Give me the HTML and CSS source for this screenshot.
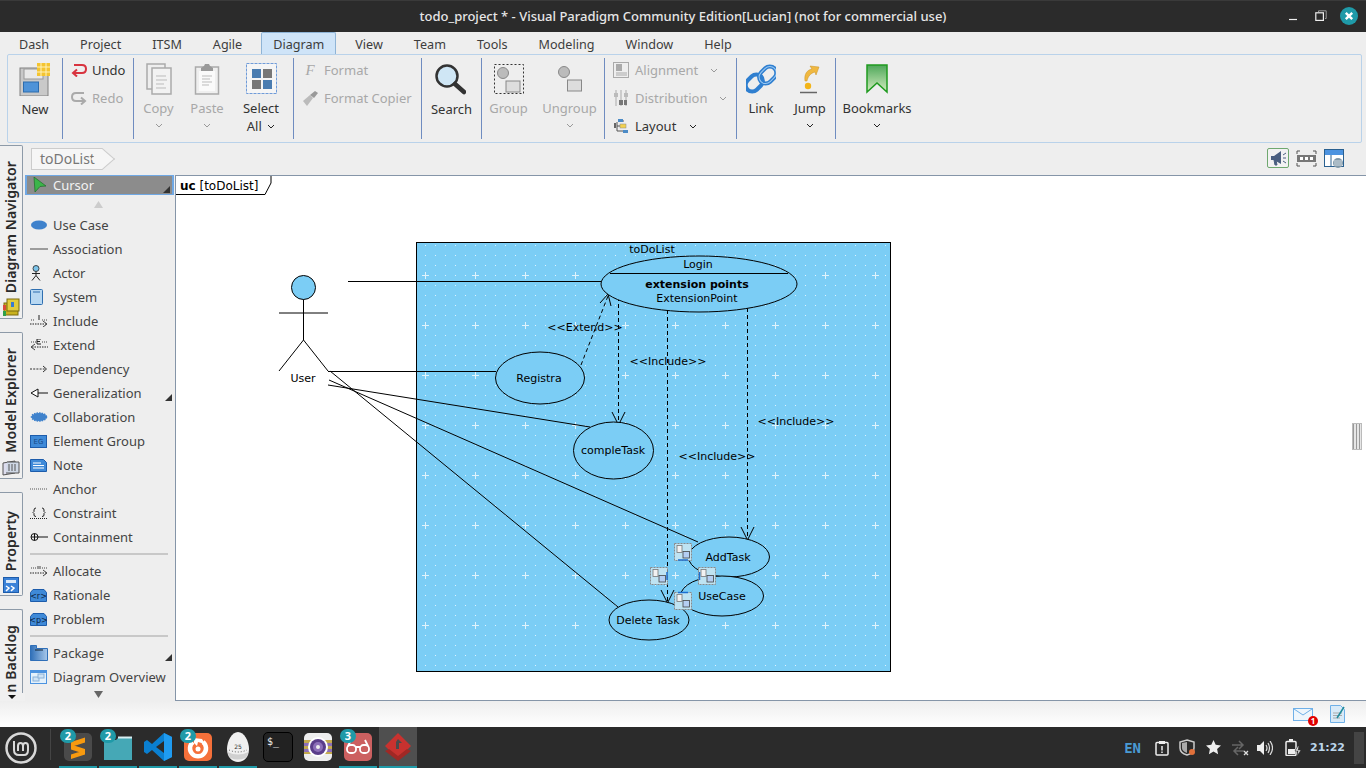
FILE: index.html
```html
<!DOCTYPE html>
<html lang="en">
<head>
  <meta charset="UTF-8">
  <title>todo_project - Visual Paradigm</title>
  <link rel="stylesheet" href="styles.css">
</head>
<body>

  <header class="titlebar">
    <span class="title">todo_project * - Visual Paradigm Community Edition[Lucian] (not for commercial use)</span>
    <div class="win-buttons">
      <svg class="win-min" width="10" height="10" viewBox="0 0 10 10"><path d="M1 8.500h8" stroke="#eee" stroke-width="1.200"/></svg>
      <svg width="12" height="12" viewBox="0 0 12 12"><path d="M3.500 2V.8h7.700v7.700H10" fill="none" stroke="#999"/><rect x=".8" y="2.800" width="7.600" height="7.600" fill="none" stroke="#eee" stroke-width="1.200"/></svg>
      <svg width="18" height="18" viewBox="0 0 18 18"><circle cx="9" cy="9" r="9" fill="#1f9aa8"/><path d="M5.800 5.800l6.400 6.400M12.200 5.800l-6.400 6.400" stroke="#fff" stroke-width="2.400"/></svg>
    </div>
  </header>

  <nav class="menu">
    <a>Dash</a><a>Project</a><a>ITSM</a><a>Agile</a><a class="active">Diagram</a><a>View</a><a>Team</a><a>Tools</a><a>Modeling</a><a>Window</a><a>Help</a>
  </nav>

  <section class="ribbon">
    <div class="group g-new">
      <div class="big w-new">
        <div class="ico"><svg width="32" height="34" viewBox="0 0 32 34"><rect x="1" y="6" width="28" height="28" fill="#c9c9c9" stroke="#808080"/><rect x="5" y="7" width="19" height="10" fill="#e9e9e9" stroke="#999"/><rect x="4.500" y="20" width="15" height="10" fill="#4f93d8" stroke="#2d6cae"/><rect x="18" y="1" width="13" height="13" fill="#f4c430"/><path d="M22 1v13M27 1v13M18 5h13M18 10h13" stroke="#fff2b8"/></svg></div>
        <span>New</span>
      </div>
    </div>
    <div class="group g-undo">
      <div class="row"><svg width="16" height="14" viewBox="0 0 16 14"><path d="M3 2h8q4 0 4 4t-4 4H2" fill="none" stroke="#d8333f" stroke-width="2"/><path d="M6 6.500L2 10l4 3.500" fill="none" stroke="#d8333f" stroke-width="2"/></svg><span>Undo</span></div>
      <div class="row off"><svg width="16" height="14" viewBox="0 0 16 14"><path d="M13 2H5Q1 2 1 6t4 4h9" fill="none" stroke="#aaa" stroke-width="2"/><path d="M10 6.500l4 3.500-4 3.500" fill="none" stroke="#aaa" stroke-width="2"/></svg><span>Redo</span></div>
    </div>
    <div class="group g-clip">
      <div class="big w-copy off">
        <div class="ico"><svg width="26" height="32" viewBox="0 0 26 32"><rect x="1" y="1" width="18" height="25" fill="#eee" stroke="#aaa" stroke-width="1.500"/><rect x="6" y="5" width="19" height="26" fill="#f2f2f2" stroke="#aaa" stroke-width="1.500"/><path d="M10 13h10M10 17h11M10 21h8M10 25h10" stroke="#bbb"/></svg></div>
        <span>Copy</span><svg class="chev" width="8" height="5" viewBox="0 0 8 5"><path d="M1 1l3 3 3-3" fill="none" stroke="#999"/></svg>
      </div>
      <div class="big w-paste off">
        <div class="ico"><svg width="26" height="32" viewBox="0 0 26 32"><rect x="1.500" y="4" width="23" height="27" fill="#efefef" stroke="#aaa" stroke-width="1.500"/><rect x="5" y="8" width="16" height="20" fill="#fafafa"/><path d="M7 5l3-2 1-2h4l1 2 3 2v3H7z" fill="#999"/><path d="M8 13h10M8 16h8M8 19h10M8 22h7" stroke="#bbb"/></svg></div>
        <span>Paste</span><svg class="chev" width="8" height="5" viewBox="0 0 8 5"><path d="M1 1l3 3 3-3" fill="none" stroke="#999"/></svg>
      </div>
      <div class="big w-select">
        <div class="ico"><svg width="31" height="32" viewBox="0 0 31 32"><rect x=".5" y=".5" width="30" height="30" fill="#f5f5f5" stroke="#6f9bd8" stroke-dasharray="3 1"/><rect x="6" y="6" width="9" height="9" fill="#4a7cb0"/><rect x="17" y="6" width="9" height="9" fill="#777"/><rect x="6" y="17" width="9" height="9" fill="#777"/><rect x="17" y="17" width="9" height="9" fill="#4a7cb0"/></svg></div>
        <span>Select</span>
        <span>All <svg class="chev-in" width="8" height="5" viewBox="0 0 8 5"><path d="M1 1l3 3 3-3" fill="none" stroke="#222"/></svg></span>
      </div>
    </div>
    <div class="group g-format off">
      <div class="row"><span class="f-ico">F</span><span>Format</span></div>
      <div class="row"><svg width="16" height="15" viewBox="0 0 16 15"><path d="M1 10l7-6 3 3-6 8z" fill="#bbb"/><path d="M8 4l5-4 3 2-4 5z" fill="#999"/></svg><span>Format Copier</span></div>
    </div>
    <div class="group g-search">
      <div class="big w-search">
        <div class="ico"><svg class="lens" width="32" height="32" viewBox="0 0 32 32"><circle cx="13" cy="13" r="10.500" fill="#cfe6f5" stroke="#333" stroke-width="2.500"/><path d="M21 21l9 8" stroke="#333" stroke-width="4.500" stroke-linecap="round"/></svg></div>
        <span>Search</span>
      </div>
    </div>
    <div class="group g-grp off">
      <div class="big w-group">
        <div class="ico"><svg width="30" height="30" viewBox="0 0 30 30"><rect x=".5" y=".5" width="29" height="29" fill="none" stroke="#333" stroke-dasharray="2 2"/><circle cx="9" cy="9" r="5.500" fill="#bbb" stroke="#888"/><rect x="12" y="17" width="14" height="11" fill="#ddd" stroke="#888"/></svg></div>
        <span>Group</span>
      </div>
      <div class="big w-ungroup">
        <div class="ico"><svg width="26" height="28" viewBox="0 0 26 28"><circle cx="7" cy="7" r="5.500" fill="#bbb" stroke="#888"/><rect x="10.500" y="15" width="14" height="11" fill="#ddd" stroke="#888"/></svg></div>
        <span>Ungroup</span><svg class="chev" width="8" height="5" viewBox="0 0 8 5"><path d="M1 1l3 3 3-3" fill="none" stroke="#999"/></svg>
      </div>
    </div>
    <div class="group g-align">
      <div class="row off"><svg width="16" height="16" viewBox="0 0 16 16"><rect x=".5" y=".5" width="15" height="15" fill="none" stroke="#aaa"/><rect x="3" y="2" width="6" height="7" fill="#aaa"/><rect x="3" y="10" width="11" height="4" fill="#ccc"/></svg><span class="grow-a">Alignment</span><svg class="chev-in" width="8" height="5" viewBox="0 0 8 5"><path d="M1 1l3 3 3-3" fill="none" stroke="#999"/></svg></div>
      <div class="row off"><svg width="16" height="16" viewBox="0 0 16 16"><path d="M3 0v16M8 0v16M13 0v16" stroke="#aaa"/><rect x="1" y="3" width="4" height="4" fill="#bbb"/><rect x="6" y="10" width="4" height="5" fill="#777"/><rect x="11" y="3" width="4" height="4" fill="#bbb"/><rect x="11" y="10" width="3" height="5" fill="#777"/></svg><span class="grow-d">Distribution</span><svg class="chev-in" width="8" height="5" viewBox="0 0 8 5"><path d="M1 1l3 3 3-3" fill="none" stroke="#999"/></svg></div>
      <div class="row"><svg width="16" height="16" viewBox="0 0 16 16"><path d="M4 4v9h6M4 8h5M8 3h3" fill="none" stroke="#555"/><rect x="5" y="1" width="5" height="3" fill="#4c8bc6"/><rect x="7" y="6" width="6" height="4" fill="#f2d14f" stroke="#888" stroke-width=".5"/><rect x="10" y="12" width="5" height="3" fill="#4c8bc6"/><rect x="1" y="5" width="2" height="5" fill="#666"/></svg><span class="grow-l">Layout</span><svg class="chev-in" width="8" height="5" viewBox="0 0 8 5"><path d="M1 1l3 3 3-3" fill="none" stroke="#222"/></svg></div>
    </div>
    <div class="group g-link">
      <div class="big w-link">
        <div class="ico"><svg width="30" height="30" viewBox="0 0 30 30"><g fill="none" stroke="#2f7fd0" stroke-width="4"><rect x="15" y="1" width="13" height="19" rx="6.500" transform="rotate(45 21 11)"/><rect x="2" y="10" width="13" height="19" rx="6.500" transform="rotate(45 9 19)"/></g><g fill="none" stroke="#9cc9f2"><rect x="15" y="1" width="13" height="19" rx="6.500" transform="rotate(45 21 11)"/></g></svg></div>
        <span>Link</span>
      </div>
      <div class="big w-jump">
        <div class="ico"><svg width="22" height="30" viewBox="0 0 22 30"><path d="M6 17C5 10 8 6 13 5L11 2l9 1-3 8-1-3C12 9 9 12 8 17z" fill="#f0b840" stroke="#c99020" stroke-width=".5"/><circle cx="9" cy="22" r="3.200" fill="#f2b418"/><path d="M1 28.500h17" stroke="#666" stroke-width="1.500"/></svg></div>
        <span>Jump</span><svg class="chev" width="8" height="5" viewBox="0 0 8 5"><path d="M1 1l3 3 3-3" fill="none" stroke="#222"/></svg>
      </div>
    </div>
    <div class="group g-book">
      <div class="big w-book">
        <div class="ico"><svg width="22" height="30" viewBox="0 0 22 30"><defs><linearGradient id="bk" x1="0" y1="0" x2="0" y2="1"><stop offset="0" stop-color="#4ea85a"/><stop offset="1" stop-color="#d4ecc0"/></linearGradient></defs><path d="M1 1h20v27l-10-9-10 9z" fill="url(#bk)" stroke="#1f9a1f" stroke-width="1.500"/></svg></div>
        <span>Bookmarks</span><svg class="chev" width="8" height="5" viewBox="0 0 8 5"><path d="M1 1l3 3 3-3" fill="none" stroke="#222"/></svg>
      </div>
    </div>
  </section>

  <div class="workspace">
    <aside class="side-tabs">
      <div class="vtab t-nav">
        <svg width="18" height="18" viewBox="0 0 18 18"><rect x="2" y="5" width="14" height="12" fill="#c9b21f" stroke="#7a6a10"/><rect x="5" y="1" width="12" height="12" fill="#e2cc3c" stroke="#7a6a10"/><rect x="9" y="4" width="3" height="5" fill="#3a7bd0"/><rect x="1" y="13" width="3" height="5" fill="#2fa04a"/><rect x="1" y="7" width="3" height="5" fill="#d84a3a"/></svg>
        <span>Diagram Navigator</span>
      </div>
      <div class="vtab t-model">
        <svg width="18" height="16" viewBox="0 0 18 16"><path d="M1 3l12-2v12L1 15z" fill="#dde" stroke="#555"/><path d="M5 2h12v11H4" fill="#cfd8e6" stroke="#555"/><path d="M7 4v7M10 4v7M13 4v7" stroke="#555"/></svg>
        <span>Model Explorer</span>
      </div>
      <div class="vtab t-prop">
        <svg width="16" height="16" viewBox="0 0 16 16"><rect x=".5" y=".5" width="15" height="15" fill="#3b82d8" stroke="#1d5cab"/><rect x="3" y="3" width="10" height="3" fill="#dbe9f8"/><path d="M3 9l3 2-3 3M8 9l3 2-3 3" fill="none" stroke="#fff" stroke-width="1.500"/></svg>
        <span>Property</span>
      </div>
      <div class="vtab t-back">
        <span>Open Backlog</span>
      </div>
      <div class="tab-more"></div>
    </aside>

    <div class="work-main">
      <div class="crumbs">
        <div class="crumb">toDoList</div>
        <div class="view-tools">
          <span class="tool-on"><svg width="18" height="16" viewBox="0 0 18 16"><path d="M2 6h3l7-5v13L5 10H2z" fill="#4a5f80"/><path d="M5 10l1 5h2l-1-5zM14 5l3-2M14 8h3M14 11l3 2" stroke="#4a5f80" fill="#4a5f80"/></svg></span>
          <svg width="21" height="17" viewBox="0 0 21 17"><path d="M1 4V1h3M17 1h3v3M1 13v3h3M17 16h3v-3" fill="none" stroke="#555"/><rect x="1" y="5" width="19" height="7" fill="#777"/><path d="M4 7h3v3H4zM9 7h3v3H9zM14 7h3v3h-3z" fill="#fff"/></svg>
          <svg width="20" height="19" viewBox="0 0 20 19"><rect x=".5" y=".5" width="19" height="17" fill="#fff" stroke="#2a6090"/><rect x="1" y="1" width="18" height="5" fill="#4c93e0"/><path d="M7 6v12" stroke="#2a6090"/><circle cx="14" cy="14" r="5" fill="#7f97a8"/><path d="M10 12h8M10 14h8M10 16h8" stroke="#fff" stroke-width=".7"/></svg>
        </div>
      </div>

      <div class="panes">
        <div class="palette">
          <div class="pal-cursor">
            <svg width="14" height="16" viewBox="0 0 14 16"><path d="M1 0l12 9-6 .5L2 15z" fill="#3cb54a" stroke="#1f6a2a" stroke-width=".7"/></svg>
            <span>Cursor</span>
          </div>
          <div class="pal-arrow"><svg width="9" height="7" viewBox="0 0 9 7"><path d="M4.500 0L9 7H0z" fill="#ccc"/></svg></div>
          <div class="pal-row"><i><svg width="18" height="10" viewBox="0 0 18 10"><ellipse cx="9" cy="5" rx="8" ry="4.500" fill="#3f82cc"/></svg></i><span>Use Case</span></div>
          <div class="pal-row"><i><svg width="18" height="4" viewBox="0 0 18 4"><path d="M0 2h18" stroke="#666" stroke-width="1.200"/></svg></i><span>Association</span></div>
          <div class="pal-row"><i><svg width="12" height="16" viewBox="0 0 12 16"><circle cx="6" cy="3.500" r="3" fill="#7cc4ea" stroke="#222" stroke-width=".8"/><path d="M6 6.500v4M2 8.500h8M6 10.500l-4 5M6 10.500l4 5" stroke="#222" fill="none"/></svg></i><span>Actor</span></div>
          <div class="pal-row"><i><svg width="13" height="16" viewBox="0 0 13 16"><rect x=".5" y=".5" width="12" height="15" rx="1" fill="#b8d8f2" stroke="#2f6fb0"/><path d="M3 3h7" stroke="#2f6fb0"/></svg></i><span>System</span></div>
          <div class="pal-row"><i><svg width="18" height="12" viewBox="0 0 18 12"><path d="M9 0v5" stroke="#222"/><path d="M1 5h4M12 5h5" stroke="#444" stroke-dasharray="1 1"/><path d="M0 9h16" stroke="#222" stroke-dasharray="1.500 1"/><path d="M13 6l4 3-4 3" fill="none" stroke="#444"/></svg></i><span>Include</span></div>
          <div class="pal-row"><i><svg width="18" height="12" viewBox="0 0 18 12"><path d="M1 3h5M12 3h5" stroke="#444" stroke-dasharray="1 1"/><path d="M7 0h4M7 0v5h4M7 2.500h3" fill="none" stroke="#222"/><path d="M2 8h16" stroke="#222" stroke-dasharray="1.500 1"/><path d="M5 5L1 8l4 3" fill="none" stroke="#444"/></svg></i><span>Extend</span></div>
          <div class="pal-row"><i><svg width="18" height="8" viewBox="0 0 18 8"><path d="M0 4h16" stroke="#333" stroke-dasharray="2 1.200"/><path d="M13 1l3.500 3L13 7" fill="none" stroke="#333"/></svg></i><span>Dependency</span></div>
          <div class="pal-row more"><i><svg width="18" height="10" viewBox="0 0 18 10"><path d="M1 5l7-4v8zM8 5h10" fill="#fff" stroke="#111"/></svg></i><span>Generalization</span></div>
          <div class="pal-row"><i><svg width="18" height="10" viewBox="0 0 18 10"><ellipse cx="9" cy="5" rx="7.500" ry="4" fill="#3f82cc" stroke="#3f82cc" stroke-width="1.500" stroke-dasharray="1.500 1"/></svg></i><span>Collaboration</span></div>
          <div class="pal-row"><i><svg width="17" height="13" viewBox="0 0 17 13"><rect x=".5" y=".5" width="16" height="12" fill="#3f8ad8" stroke="#1d5cab"/><text class="pal-ico-t" x="8.500" y="9">EG</text></svg></i><span>Element Group</span></div>
          <div class="pal-row"><i><svg width="17" height="13" viewBox="0 0 17 13"><path d="M.5.500h13l3 3v9H.5z" fill="#3f8ad8" stroke="#1d5cab"/><path d="M3 4h8M3 6.500h11M3 9h11" stroke="#fff"/></svg></i><span>Note</span></div>
          <div class="pal-row"><i><svg width="18" height="2" viewBox="0 0 18 2"><path d="M0 1h18" stroke="#555" stroke-dasharray="1 1"/></svg></i><span>Anchor</span></div>
          <div class="pal-row"><i><svg width="18" height="12" viewBox="0 0 18 12"><path d="M6 1Q4 1 4 3v1.500L3 5.500l1 1V8q0 1.500 2 1.500M12 1q2 0 2 2v1.500l1 1-1 1V8q0 1.500-2 1.500" fill="none" stroke="#222"/><path d="M0 11.500h18" stroke="#222" stroke-dasharray="1 1"/></svg></i><span>Constraint</span></div>
          <div class="pal-row"><i><svg width="18" height="10" viewBox="0 0 18 10"><circle cx="4.500" cy="5" r="3.500" fill="none" stroke="#111"/><path d="M1 5h17M4.500 1.500v7" stroke="#111"/></svg></i><span>Containment</span></div>
          <div class="pal-sep"></div>
          <div class="pal-row"><i><svg width="18" height="12" viewBox="0 0 18 12"><path d="M1 3h5M12 3h5" stroke="#444" stroke-dasharray="1 1"/><path d="M7 1h4v3H7z" fill="#999"/><path d="M0 8h16" stroke="#222" stroke-dasharray="1.500 1"/><path d="M13 5l4 3-4 3" fill="none" stroke="#444"/></svg></i><span>Allocate</span></div>
          <div class="pal-row"><i><svg width="17" height="13" viewBox="0 0 17 13"><path d="M3 .5h11l2.500 3v9H.5v-9z" fill="#3f8ad8" stroke="#1d5cab"/><text class="pal-ico-t dark" x="8.500" y="9.500">&lt;r&gt;</text></svg></i><span>Rationale</span></div>
          <div class="pal-row"><i><svg width="17" height="13" viewBox="0 0 17 13"><path d="M3 .5h11l2.500 3v9H.5v-9z" fill="#3f8ad8" stroke="#1d5cab"/><text class="pal-ico-t dark" x="8.500" y="9.500">&lt;p&gt;</text></svg></i><span>Problem</span></div>
          <div class="pal-sep"></div>
          <div class="pal-row more"><i><svg width="18" height="16" viewBox="0 0 18 16"><defs><linearGradient id="pk" x1="0" y1="0" x2="1" y2="0"><stop offset="0" stop-color="#2f6fb8"/><stop offset="1" stop-color="#a8c8ea"/></linearGradient></defs><path d="M.5.500h6v3h11v12H.5z" fill="url(#pk)" stroke="#2f6fb8"/><path d="M5 5h8" stroke="#123"/></svg></i><span>Package</span></div>
          <div class="pal-row"><i><svg width="17" height="14" viewBox="0 0 17 14"><rect x=".5" y=".5" width="16" height="13" fill="#e4f1fb" stroke="#4c93e0"/><rect x="1" y="1" width="15" height="2" fill="#4c93e0"/><rect x="3" y="7" width="6" height="4" fill="#cfe3f5" stroke="#8ab2d8"/><rect x="8" y="4" width="6" height="4" fill="#cfe3f5" stroke="#8ab2d8"/></svg></i><span>Diagram Overview</span></div>
          <div class="pal-arrow down"><svg width="9" height="7" viewBox="0 0 9 7"><path d="M0 0h9L4.500 7z" fill="#666"/></svg></div>
        </div>

        <main class="canvas">
          <svg class="diagram" width="1191" height="525" viewBox="175 175 1191 525">
            <defs>
              <pattern id="grid" x="375" y="225" width="50" height="50" patternUnits="userSpaceOnUse">
                <g fill="#e0f3fc">
                  <rect x="10" y="10" width="1" height="1"/><rect x="20" y="10" width="1" height="1"/><rect x="30" y="10" width="1" height="1"/><rect x="40" y="10" width="1" height="1"/>
                  <rect x="0" y="10" width="1" height="1"/><rect x="0" y="20" width="1" height="1"/><rect x="0" y="30" width="1" height="1"/><rect x="0" y="40" width="1" height="1"/>
                  <rect x="10" y="20" width="1" height="1"/><rect x="20" y="20" width="1" height="1"/><rect x="30" y="20" width="1" height="1"/><rect x="40" y="20" width="1" height="1"/>
                  <rect x="10" y="30" width="1" height="1"/><rect x="20" y="30" width="1" height="1"/><rect x="30" y="30" width="1" height="1"/><rect x="40" y="30" width="1" height="1"/>
                  <rect x="10" y="40" width="1" height="1"/><rect x="20" y="40" width="1" height="1"/><rect x="30" y="40" width="1" height="1"/><rect x="40" y="40" width="1" height="1"/>
                  <rect x="10" y="0" width="1" height="1"/><rect x="20" y="0" width="1" height="1"/><rect x="30" y="0" width="1" height="1"/><rect x="40" y="0" width="1" height="1"/>
                  <rect x="0" y="47" width="1" height="3"/><rect x="0" y="0" width="1" height="4"/><rect x="47" y="0" width="3" height="1"/><rect x="0" y="0" width="4" height="1"/>
                </g>
              </pattern>
              <symbol id="handle" viewBox="0 0 18 18">
                <rect x=".5" y=".5" width="17" height="17" fill="#bfe3f2" stroke="#8a8a8a" stroke-dasharray="2 1"/>
                <rect x="3" y="2.500" width="5" height="7" fill="#f2f2f2" stroke="#777" stroke-width=".8"/>
                <rect x="9" y="8.500" width="6.500" height="6.500" fill="#b4cef2" stroke="#444" stroke-width=".8"/>
              </symbol>
            </defs>

            <path class="line tab" d="M175.500 175.500H271V183L265 194.500H175.500"/>
            <text class="t12" x="180" y="190"><tspan font-weight="bold">uc</tspan> [toDoList]</text>

            <rect class="sys" x="416.500" y="242.500" width="474" height="429"/>
            <rect x="416.500" y="242.500" width="474" height="429" fill="url(#grid)" stroke="#000"/>
            <text class="t11 mid" x="652" y="253">toDoList</text>

            <!-- actor -->
            <circle class="shape" cx="303.500" cy="287.500" r="12"/>
            <path class="line" d="M303.500 299.500V340M279 313H328M303.500 340L279 371M303.500 340L328 371"/>
            <text class="t11 mid" x="303" y="382">User</text>

            <!-- associations -->
            <path class="line" d="M348 281.500H602M328 371.500H496M329 380L698 542M328 385L590 427M330 371L618 607"/>

            <!-- dashed relations -->
            <path class="line dash" d="M581 365L608 296M618.500 297V424M667.500 310V603M747.500 308V540"/>
            <path class="line" d="M600 303L608 294L611 306M612 412L618.500 425L625 412M661 590L667.500 603L674 590M741 527L747.500 540L754 527"/>
            <text class="t11 mid" x="585" y="331">&lt;&lt;Extend&gt;&gt;</text>
            <text class="t11 mid" x="668" y="365">&lt;&lt;Include&gt;&gt;</text>
            <text class="t11 mid" x="796" y="425">&lt;&lt;Include&gt;&gt;</text>
            <text class="t11 mid" x="717" y="460">&lt;&lt;Include&gt;&gt;</text>

            <!-- use cases -->
            <ellipse class="shape" cx="699" cy="284" rx="98" ry="28"/>
            <path class="line" d="M610 273.500H788"/>
            <text class="t11 mid" x="698" y="268">Login</text>
            <text class="t11 mid" x="697" y="288" font-weight="bold">extension points</text>
            <text class="t11 mid" x="697" y="302">ExtensionPoint</text>

            <ellipse class="shape" cx="540" cy="378" rx="44.500" ry="26"/>
            <text class="t11 mid" x="539" y="382">Registra</text>
            <ellipse class="shape" cx="613.500" cy="450.500" rx="40" ry="28.500"/>
            <text class="t11 mid" x="613" y="454">compleTask</text>
            <ellipse class="shape" cx="729" cy="557" rx="40.500" ry="20"/>
            <text class="t11 mid" x="728" y="561">AddTask</text>
            <ellipse class="shape" cx="722" cy="596" rx="41.500" ry="20"/>
            <text class="t11 mid" x="722" y="600">UseCase</text>
            <ellipse class="shape" cx="649" cy="620" rx="40" ry="20"/>
            <text class="t11 mid" x="648" y="624">Delete Task</text>

            <!-- connector handles -->
            <use href="#handle" x="674" y="543" width="18" height="18"/>
            <use href="#handle" x="650" y="567" width="18" height="18"/>
            <use href="#handle" x="698" y="567" width="18" height="18"/>
            <use href="#handle" x="674" y="592" width="18" height="18"/>
            <path d="M678 560h10M667 572v8M699.500 572v8M678 592.500h10" stroke="#1c6fd0" stroke-width="1.500"/>
          </svg>
          <div class="grip"></div>
        </main>
      </div>
    </div>
  </div>

  <footer class="statusbar">
    <span class="mail">
      <svg width="20" height="13" viewBox="0 0 20 13"><rect x=".5" y=".5" width="19" height="12" fill="#eef6fc" stroke="#6fb0e8"/><path d="M1 1l9 6 9-6" fill="none" stroke="#6fb0e8"/></svg>
      <b class="mail-count">1</b>
    </span>
    <svg width="16" height="18" viewBox="0 0 16 18"><path d="M.5.500h10l4 4v13H.5z" fill="#d8eaf8" stroke="#6fb0e8"/><path d="M3 8h9M3 10.500h9M3 13h7" stroke="#aaa"/><path d="M7 13L14 2" stroke="#1f8a9a" stroke-width="1.500"/></svg>
  </footer>

  <div class="taskbar">
    <div class="tb-menu">
      <svg width="32" height="32" viewBox="0 0 32 32"><circle cx="16" cy="16" r="14.500" fill="none" stroke="#d8d8d8" stroke-width="2.500"/><path d="M9 9v9q0 5 5 5h5q4 0 4-5v-4q0-3-2.500-3T18 14v5M18 14q0-3-2.500-3T13 14v5" fill="none" stroke="#d8d8d8" stroke-width="2"/></svg>
    </div>
    <div class="tb-sep"></div>

    <div class="app on">
      <b class="badge">2</b>
      <svg width="30" height="30" viewBox="0 0 30 30"><rect width="28" height="28" x="1" y="1" rx="5" fill="#4a4a4a"/><path d="M22 5.500v5L8 15v-5zM8 12.500l14 4.500v5L8 17.500zM22 18v4.500L8 27v-4.500z" fill="#f79a0f"/></svg>
    </div>
    <div class="app on">
      <b class="badge">2</b>
      <svg width="30" height="30" viewBox="0 0 30 30"><path d="M1 8h28v20H1z" fill="#45a8b6"/><path d="M1 8h12l3-3h13v3z" fill="#45a8b6"/><path d="M15 4.500h14v2H15z" fill="#d8eef2"/></svg>
    </div>
    <div class="app on">
      <svg width="30" height="30" viewBox="0 0 30 30"><path d="M21 1l8 4v20l-8 4L9 18l-5 4-3-2v-10l3-2 5 4z" fill="#0a7fd0"/><path d="M21 1l8 4v20l-8 4z" fill="#1f9bf0"/><path d="M21 9v12l-8-6z" fill="#2b2b2b"/></svg>
    </div>
    <div class="app on">
      <b class="badge">2</b>
      <svg width="30" height="30" viewBox="0 0 30 30"><rect x="1" y="1" width="28" height="28" rx="5" fill="#f5703a"/><path d="M10 10a8 8 0 1 0 10 0" fill="none" stroke="#fff" stroke-width="4.500"/><path d="M11 6l8 1 3 5-7-2-1 4-3-3z" fill="#fff"/><circle cx="15" cy="17" r="2.500" fill="#fff"/></svg>
    </div>
    <div class="app on">
      <svg width="24" height="30" viewBox="0 0 24 30"><path d="M12 0c6 0 11 9 11 17 0 8-5 13-11 13S1 25 1 17C1 9 6 0 12 0z" fill="#f0f0f0"/><path d="M1.500 20q10.500 5 21 0-1 4-3 6-8 3-15 0-2-2-3-6z" fill="#d0d0d0"/><path d="M3 18q9 4 18 0" fill="none" stroke="#333" stroke-width=".8" stroke-dasharray="1 2"/><text class="egg" x="12" y="17">25</text></svg>
    </div>
    <div class="app">
      <div class="term"><span>$_</span></div>
    </div>
    <div class="app">
      <svg width="30" height="30" viewBox="0 0 30 30"><rect x="1" y="1" width="28" height="28" rx="5" fill="#eee"/><path d="M1 8h28v14H1z" fill="#c2a94e"/><path d="M1 11h28v3H1zM1 17h28v3H1z" fill="#8c6fb8"/><circle cx="15" cy="15" r="10" fill="#fff"/><circle cx="15" cy="15" r="8" fill="#5a3d8a"/><circle cx="15" cy="15" r="5" fill="#8c6fb8"/><circle cx="15" cy="15" r="2" fill="#eee"/></svg>
    </div>
    <div class="app on">
      <b class="badge">3</b>
      <svg width="30" height="30" viewBox="0 0 30 30"><rect x="1" y="1" width="28" height="28" rx="5" fill="#cc6060"/><rect x="4" y="13" width="9" height="8" rx="3.500" fill="none" stroke="#fff" stroke-width="1.800"/><rect x="17" y="13" width="9" height="8" rx="3.500" fill="none" stroke="#fff" stroke-width="1.800"/><path d="M13 15h4M5 14l3-6M25 14l-3-6" stroke="#fff" stroke-width="1.800" fill="none"/></svg>
    </div>
    <div class="app on current">
      <svg width="30" height="30" viewBox="0 0 30 30"><path d="M15 1l13 13-13 13L2 14z" fill="#c8322f"/><path d="M2 19l13 10 13-10-4-2-9 7-9-7z" fill="#a02825"/><path d="M15 7l4 4h-3v6h-3v-7z" fill="#4a4a4a"/></svg>
    </div>

    <div class="tray">
      <b class="lang">EN</b>
      <svg width="14" height="16" viewBox="0 0 14 16"><rect x="1" y="2.500" width="12" height="12.500" rx="1" fill="none" stroke="#eee" stroke-width="1.500"/><rect x="4" y="1" width="6" height="3" fill="#eee"/><path d="M7 6v4.500M7 11.500v1.500" stroke="#eee" stroke-width="1.500"/></svg>
      <svg width="17" height="17" viewBox="0 0 17 17"><path d="M8 1l7 2v6q0 5-7 7-7-2-7-7V3z" fill="none" stroke="#ccc" stroke-width="1.500"/><path d="M8 3v11q-5-2-5-5V4z" fill="#aaa"/><circle cx="13" cy="13" r="3" fill="#e0703a"/></svg>
      <svg width="15" height="15" viewBox="0 0 15 15"><path d="M7.500 0l2.200 4.800 5.300.6-3.900 3.600 1 5.200-4.600-2.600-4.600 2.600 1-5.200L0 5.400l5.300-.6z" fill="#eee"/></svg>
      <svg width="18" height="16" viewBox="0 0 18 16"><path d="M1 5h10M8 1l4 4-4 4M13 11H4M7 7l-4 4 4 4" fill="none" stroke="#666" stroke-width="1.500"/><path d="M13 11l4 4M17 11l-4 4" stroke="#ddd" stroke-width="1.300"/></svg>
      <svg class="tray-vol" width="16" height="14" viewBox="0 0 16 14"><path d="M0 4h3l4-4v14l-4-4H0z" fill="#eee"/><path d="M9 4q2 3 0 6M11 2q3 5 0 10M13 0q5 7 0 14" fill="none" stroke="#ddd" stroke-width="1.200"/></svg>
      <svg width="17" height="17" viewBox="0 0 17 17"><rect x="1" y="2.500" width="10" height="14" rx="1" fill="none" stroke="#eee" stroke-width="1.500"/><rect x="4" y="0" width="4" height="2" fill="#eee"/><path d="M3 10h7v5H3z" fill="#eee"/><path d="M13 7l-3 5h3l-1 5 4-6h-3l1-4z" fill="#eee" stroke="#2b2b2b" stroke-width=".6"/></svg>
      <b class="clock">21:22</b>
      <div class="tray-end"></div>
    </div>
  </div>

</body>
</html>
```
FILE: styles.css
```css
* {
  box-sizing: border-box;
}
html, body {
  margin: 0;
  height: 768px;
  overflow: hidden;
}
body {
  width: 1366px;
  font-family: "Noto Sans", sans-serif;
  font-size: 13px;
  color: #333;
  background-color: #eeeeee;
  display: flex;
  flex-direction: column;
}

/* title bar */
.titlebar {
  height: 32px;
  background-color: #2b2b2b;
  border-top: 1px solid #3a3a3a;
  padding-bottom: 2px;
  color: #e6e6e6;
  font-weight: 500;
  display: flex;
  align-items: center;
  justify-content: center;
  position: relative;
  flex-shrink: 0;
}
.win-buttons {
  position: absolute;
  right: 8px;
  top: 6px;
  display: flex;
  align-items: center;
  gap: 13px;
}
.win-min {
  margin-right: 4px;
}

/* menu */
.menu {
  height: 22px;
  display: flex;
  flex-shrink: 0;
}
.menu a {
  margin-left: 7px;
  padding: 2px 11px 0;
  font-size: 12.6px;
  line-height: 19px;
  border: 1px solid transparent;
  border-bottom: 0;
  color: #3d3d3d;
}
.menu a.active {
  background-color: #cfe4f8;
  border-color: #8fb4d6;
  border-radius: 2px 2px 0 0;
}

/* ribbon */
.ribbon {
  height: 89px;
  margin: 0 4px 0 7px;
  border: 1px solid #b9d2ea;
  border-radius: 2px;
  display: flex;
  flex-shrink: 0;
}
.group {
  height: 81px;
  margin-top: 3px;
  border-right: 1px solid #6f8cc0;
  display: flex;
  flex-shrink: 0;
}
.g-new { width: 55px; }
.g-undo { width: 71px; flex-direction: column; }
.g-clip { width: 160px; }
.g-format { width: 128px; flex-direction: column; }
.g-search { width: 60px; }
.g-grp { width: 123px; }
.g-align { width: 132px; flex-direction: column; }
.g-link { width: 99px; }
.g-book { width: 84px; border-right: 0; }

.big {
  display: flex;
  flex-direction: column;
  align-items: center;
  line-height: 18px;
  color: #333;
}
.big .ico {
  height: 41px;
  display: flex;
  align-items: center;
  justify-content: center;
}
.g-new .ico, .g-search .ico {
  height: 42px;
}
.w-new { width: 57px; }
.w-copy { width: 49px; }
.w-paste { width: 48px; }
.w-select { width: 58px; margin-left: 1px; }
.w-search { width: 59px; }
.w-group { width: 53px; }
.w-ungroup { width: 69px; }
.w-link { width: 48px; }
.w-jump { width: 50px; }
.w-book { width: 82px; }
.lens {
  margin-left: -3px;
}
.chev {
  margin-top: 6px;
}
.chev-in {
  margin-left: 2px;
  vertical-align: 2px;
}

.row {
  height: 28px;
  padding-left: 8px;
  display: flex;
  align-items: center;
  gap: 5px;
  flex-shrink: 0;
}
.row:first-child {
  margin-top: -2px;
}
.off, .off span {
  color: #a8a8a8;
}
.g-format .row {
  gap: 6px;
}
.f-ico {
  width: 16px;
  text-align: center;
  font-family: "Liberation Serif", serif;
  font-style: italic;
  font-size: 15px;
}
.grow-a { width: 68px; }
.grow-d { width: 77px; }
.grow-l { width: 47px; }
.g-align .row svg:first-child {
  margin-right: 1px;
}

/* workspace */
.workspace {
  flex: 1;
  min-height: 0;
  display: flex;
}
.side-tabs {
  width: 25px;
  flex-shrink: 0;
  padding-top: 2px;
  display: flex;
  flex-direction: column;
  overflow: hidden;
  position: relative;
}
.vtab {
  width: 23px;
  border: 1px solid #8d9aa8;
  border-left: 0;
  border-radius: 0 2px 2px 0;
  margin-bottom: 13px;
  overflow: hidden;
  display: flex;
  flex-direction: column-reverse;
  align-items: center;
  justify-content: flex-start;
  padding: 4px 0 2px;
  gap: 5px;
  flex-shrink: 0;
  background-color: #f0f0f0;
}
.vtab span {
  writing-mode: vertical-rl;
  transform: rotate(180deg);
  font-size: 14px;
  letter-spacing: .1px;
  font-weight: 600;
  color: #2b2b2b;
  white-space: nowrap;
  line-height: 20px;
}
.t-nav { height: 174px; }
.t-model { height: 147px; gap: 7px; }
.t-prop { height: 104px; gap: 6px; }
.t-back {
  height: 94px;
  margin-bottom: 0;
  border-bottom: 0;
  padding: 15px 0 0;
  flex-direction: column;
  justify-content: flex-start;
}
.tab-more {
  position: absolute;
  left: 0;
  bottom: 0;
  width: 25px;
  height: 8px;
  background-color: #f0f0f0;
}
.tab-more::after {
  content: "";
  position: absolute;
  left: 8px;
  top: 2px;
  border: 4px solid transparent;
  border-top: 4px solid #111;
  border-bottom: 0;
}

.work-main {
  flex: 1;
  min-width: 0;
  display: flex;
  flex-direction: column;
}
.crumbs {
  height: 32px;
  padding: 5px 22px 0 6px;
  display: flex;
  justify-content: space-between;
  align-items: flex-start;
  flex-shrink: 0;
}
.crumb {
  width: 72px;
  height: 22px;
  padding-left: 8px;
  line-height: 20px;
  font-size: 14px;
  color: #777;
  background-color: #f6f6f6;
  border: 1px solid #ccc;
  border-right: 0;
  position: relative;
}
.crumb::after {
  content: "";
  position: absolute;
  right: -8px;
  top: 2px;
  width: 15px;
  height: 15px;
  background-color: #f6f6f6;
  border-top: 1px solid #ccc;
  border-right: 1px solid #ccc;
  transform: rotate(45deg) skew(-4deg, -4deg);
}
.view-tools {
  display: flex;
  align-items: center;
  gap: 7px;
}
.tool-on {
  width: 22px;
  height: 20px;
  border: 1px solid #6fa86f;
  border-radius: 2px;
  background-color: #f2f2f2;
  display: flex;
  align-items: center;
  justify-content: center;
}
.panes {
  flex: 1;
  min-height: 0;
  display: flex;
}

/* palette */
.palette {
  width: 150px;
  flex-shrink: 0;
  font-size: 13px;
  color: #444;
}
.pal-cursor {
  height: 20px;
  width: 149px;
  padding-left: 6px;
  background-color: #8c8c8c;
  border: 1px solid #70a8e4;
  border-width: 1px 2px;
  color: #f2f2f2;
  display: flex;
  align-items: center;
  gap: 6px;
  position: relative;
}
.pal-cursor::after, .more::after {
  content: "";
  position: absolute;
  right: 2px;
  bottom: 1px;
  border-style: solid;
  border-width: 0 0 7px 7px;
  border-color: transparent transparent #333 transparent;
}
.pal-arrow {
  height: 18px;
  width: 146px;
  display: flex;
  align-items: center;
  justify-content: center;
}
.pal-arrow.down {
  height: 11px;
}
.pal-row {
  height: 24px;
  display: flex;
  align-items: center;
  position: relative;
}
.pal-row i {
  width: 28px;
  padding-left: 5px;
  display: flex;
  justify-content: flex-start;
  flex-shrink: 0;
}
.pal-ico-t {
  font-family: "DejaVu Sans", sans-serif;
  font-style: normal;
  font-size: 7px;
  text-anchor: middle;
  fill: #174a88;
}
.pal-ico-t.dark {
  font-size: 8px;
  fill: #0c2444;
}
.more::after {
  right: 3px;
  bottom: 4px;
}
.pal-sep {
  height: 2px;
  width: 138px;
  margin: 4px 0 4px 5px;
  background-color: #c8c8c8;
}

/* canvas */
.canvas {
  flex: 1;
  min-width: 0;
  background-color: #fff;
  border: 1px solid #8595a8;
  border-width: 1px 0 1px 1px;
  position: relative;
  overflow: hidden;
}
.diagram {
  display: block;
  position: absolute;
  left: -1px;
  top: -1px;
}
.diagram text {
  font-family: "DejaVu Sans", sans-serif;
  fill: #000;
}
.t11 { font-size: 11px; }
.t12 { font-size: 12px; }
.mid { text-anchor: middle; }
.sys { fill: #7bcdf5; }
.line {
  fill: none;
  stroke: #000;
  stroke-width: 1;
}
.tab { fill: #fff; }
.dash { stroke-dasharray: 4 3; }
.shape {
  fill: #7bcdf5;
  stroke: #000;
  stroke-width: 1;
}
.grip {
  position: absolute;
  right: 4px;
  top: 247px;
  width: 10px;
  height: 27px;
  background: repeating-linear-gradient(90deg, #999 0 1px, #e6e6e6 1px 3px);
  border: 1px solid #bbb;
}

/* status bar */
.statusbar {
  height: 26px;
  flex-shrink: 0;
  background: linear-gradient(#eeeeee, #ffffff);
  display: flex;
  justify-content: flex-end;
  align-items: center;
  gap: 17px;
  padding-right: 20px;
}
.mail {
  position: relative;
  display: flex;
}
.mail-count {
  position: absolute;
  right: -5px;
  bottom: -5px;
  width: 10px;
  height: 10px;
  border-radius: 50%;
  background-color: #e00000;
  color: #fff;
  font-size: 8px;
  line-height: 10px;
  text-align: center;
}

/* panel */
.taskbar {
  height: 41px;
  flex-shrink: 0;
  background-color: #2b2b2b;
  display: flex;
  align-items: stretch;
}
.tb-menu {
  width: 50px;
  padding-left: 5px;
  display: flex;
  align-items: center;
}
.tb-sep {
  width: 1px;
  margin: 2px 8px 8px 0;
  background-color: #444;
}
.app {
  width: 38px;
  margin-right: 2px;
  padding-top: 5px;
  border-bottom: 2px solid transparent;
  display: flex;
  justify-content: center;
  align-items: flex-start;
  position: relative;
}
.app.on {
  border-bottom-color: #1f9aa8;
}
.app.current {
  background-color: #4f4f4f;
}
.badge {
  position: absolute;
  left: 1px;
  top: 2px;
  width: 16px;
  height: 14px;
  border-radius: 8px;
  background-color: #1f9aa8;
  color: #fff;
  font-size: 11px;
  line-height: 14px;
  text-align: center;
  z-index: 1;
}
.egg {
  font-family: "DejaVu Sans", sans-serif;
  font-size: 6px;
  text-anchor: middle;
  fill: #333;
}
.term {
  width: 30px;
  height: 30px;
  border-radius: 5px;
  border: 1px solid #000;
  background-color: #222;
  color: #eee;
  font-family: "DejaVu Sans Mono", monospace;
  font-size: 10px;
  line-height: 14px;
  padding: 2px 3px;
}
.tray {
  margin-left: auto;
  display: flex;
  align-items: center;
  gap: 10px;
  color: #eee;
}
.tray-vol {
  margin: 0 2px 0 -2px;
}
.lang {
  font-family: "DejaVu Sans Mono", monospace;
  font-size: 14px;
  color: #4a9ad4;
  margin-right: 4px;
}
.clock {
  font-family: "DejaVu Sans", sans-serif;
  font-size: 11px;
  color: #bcd6ea;
  margin-left: -2px;
}
.tray-end {
  width: 10px;
  height: 32px;
  margin: 0 2px 0 -1px;
  background-color: #444;
}
```
